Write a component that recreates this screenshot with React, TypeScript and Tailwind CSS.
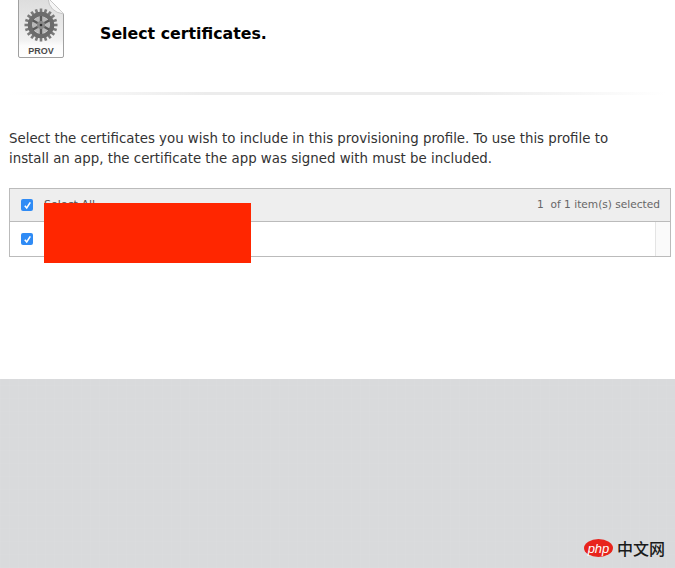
export default function App() {
  const font = { fontFamily: '"DejaVu Sans", sans-serif' };
  const Check = () => (
    <span className="flex h-3 w-3 items-center justify-center rounded-[2px] bg-[#2f8bf5]">
      <svg width="9" height="9" viewBox="0 0 8 8" fill="none">
        <path d="M1.6 4.2 L3.3 6.2 L6.5 1.2" stroke="white" strokeWidth="1.4" />
      </svg>
    </span>
  );
  const teeth = Array.from({ length: 20 }, (_, i) => i * 18);
  return (
    <div className="relative flex h-[568px] w-[675px] flex-col overflow-hidden bg-white" style={font}>
      <div className="flex h-[92px] shrink-0 items-start">
        <div className="ml-[18px] h-[58px] w-[46px] shrink-0">
          <svg width="46" height="58" viewBox="0 0 46 58">
            <defs>
              <linearGradient id="pg" x1="0" y1="0" x2="0" y2="1">
                <stop offset="0" stopColor="#dcdcdc" />
                <stop offset="0.7" stopColor="#f0f0f0" />
                <stop offset="0.8" stopColor="#fbfbfb" />
                <stop offset="1" stopColor="#ffffff" />
              </linearGradient>
            </defs>
            <path d="M0.5 -2 H30 L45.5 14 V56 Q45.5 57.5 44 57.5 H2 Q0.5 57.5 0.5 56 Z" fill="url(#pg)" stroke="#a0a0a0" />
            <path d="M30 -2 Q31 12 45.5 14" fill="#f6f6f6" stroke="#c4c4c4" />
            <g transform="translate(23 25)">
              {teeth.map((a) => (
                <rect key={a} x="-1.3" y="-16.5" width="2.6" height="4" fill="#7a7a7a" transform={`rotate(${a})`} />
              ))}
              <circle r="11" fill="none" stroke="#6c6c6c" strokeWidth="4.5" />
              <circle r="8.5" fill="#b9b9b9" />
              <g stroke="#5a5a5a" strokeWidth="2.4">
                <path d="M0 -9 V9 M-8 -4.5 L8 4.5 M-8 4.5 L8 -4.5" />
              </g>
              <circle r="4" fill="#8a8a8a" />
              <circle r="1.3" fill="#333" />
            </g>
            <text x="23" y="54" textAnchor="middle" fontSize="9" fontWeight="700" fill="#4a4a4a" fontFamily="Liberation Sans, sans-serif">PROV</text>
          </svg>
        </div>
        <h1 className="ml-9 mt-[24px] text-[15.8px] font-bold leading-5 text-black">Select certificates.</h1>
      </div>
      <div className="mx-[9px] h-[3px] shrink-0 bg-[linear-gradient(90deg,#ffffff,#ececec_30%,#ececec_70%,#ffffff)]" />
      <p className="mx-[9px] mt-[34px] w-[640px] text-[13.35px] leading-5 text-[#333]">
        Select the certificates you wish to include in this provisioning profile. To use this profile to install an app, the certificate the app was signed with must be included.
      </p>
      <div className="mx-[9px] mt-[19px] w-[662px] border border-[#bbbbbb]">
        <div className="flex h-[33px] items-center justify-between border-b border-[#bbbbbb] bg-[#eeeeee] pl-[11px] pr-[10px]">
          <div className="flex items-center gap-[11px]">
            <Check />
            <span className="text-[11px] text-[#555]">Select All</span>
          </div>
          <span className="text-[10.6px] text-[#666]">1&nbsp; of 1 item(s) selected</span>
        </div>
        <div className="flex h-[34px] items-center justify-between pl-[11px]">
          <Check />
          <div className="h-full w-[15px] border-l border-[#e4e4e4] bg-[#fafafa]" />
        </div>
      </div>
      <div className="absolute left-[44px] top-[203px] h-[60px] w-[207px] bg-[#ff2600]" />
      <div className="mt-[122px] flex-1 bg-[#d9dadc] bg-[repeating-linear-gradient(90deg,rgba(255,255,255,0.035)_0px,rgba(255,255,255,0.035)_1px,transparent_1px,transparent_9px),repeating-linear-gradient(0deg,rgba(255,255,255,0.03)_0px,rgba(255,255,255,0.03)_1px,transparent_1px,transparent_13px)]" />
      <div className="absolute left-[584px] top-[539px] flex items-center gap-[4px]">
        <span className="flex h-[18px] w-[29px] items-center justify-center rounded-[50%] bg-[#e8231c] text-[13px] italic leading-none text-white" style={{ fontFamily: '"Liberation Sans", sans-serif' }}>php</span>
        <span className="text-[16px] font-medium leading-none text-[#1a1a1a]" style={{ fontFamily: '"Noto Sans CJK SC", sans-serif' }}>中文网</span>
      </div>
    </div>
  );
}
